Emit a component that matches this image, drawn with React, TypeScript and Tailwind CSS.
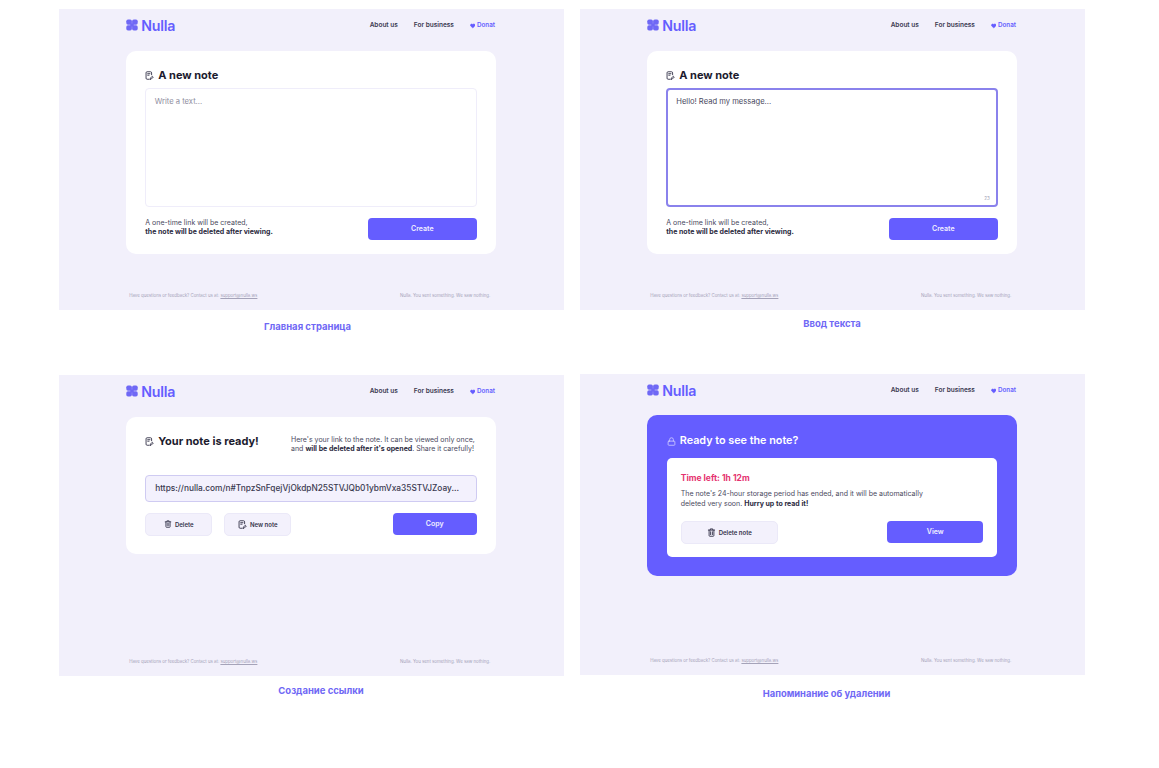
import { ReactNode } from 'react';
import { Heart, Lock } from 'lucide-react';

function Logo() {
  return (
    <svg width="12" height="12" viewBox="0 0 12 12" fill="#6f68f5">
      <rect x="0.3" y="0.6" width="5.6" height="5.2" rx="1.7" />
      <rect x="6.1" y="0.6" width="5.6" height="5.2" rx="1.7" />
      <rect x="0.3" y="6.2" width="5.6" height="5.2" rx="1.7" />
      <rect x="6.1" y="6.2" width="5.6" height="5.2" rx="1.7" />
      <rect x="4.2" y="4.2" width="3.6" height="3.6" />
    </svg>
  );
}

function NoteIcon({ size = 9 }: { size?: number }) {
  return (
    <svg width={size} height={size} viewBox="0 0 12 12" fill="none" stroke="#34334a" strokeWidth="1.2" strokeLinecap="round" strokeLinejoin="round">
      <path d="M5.6 11H2.8A1.4 1.4 0 0 1 1.4 9.6V2.4A1.4 1.4 0 0 1 2.8 1h4.6a1.4 1.4 0 0 1 1.4 1.4V5" />
      <path d="M3.6 3.6h3M3.6 5.6h1.8" />
      <path d="M7 10.9l.3-1.5 2.5-2.5 1.2 1.2-2.5 2.5z" />
    </svg>
  );
}

function TrashIcon({ size = 8 }: { size?: number }) {
  return (
    <svg width={size} height={size} viewBox="0 0 12 12" fill="none" stroke="#34334a" strokeWidth="1.2" strokeLinecap="round" strokeLinejoin="round">
      <path d="M1.8 2.8h8.4M4.4 2.6V1.2h3.2v1.4" />
      <path d="M2.8 2.8v7.2a1 1 0 0 0 1 1h4.4a1 1 0 0 0 1-1V2.8" />
      <path d="M4.8 5v3.8M7.2 5v3.8" />
    </svg>
  );
}

function Frame({ children }: { children: ReactNode }) {
  return (
    <div className="w-[505px] h-[301px] bg-[#f2f0fb] flex flex-col items-center">
      <div className="w-[369.5px] h-[33px] flex items-center justify-between shrink-0">
        <div className="flex items-center gap-[3px]">
          <Logo />
          <span className="text-[14.2px] font-semibold text-[#655dff] tracking-[-0.2px]">Nulla</span>
        </div>
        <nav className="flex items-center text-[6.5px] font-semibold text-[#3a3950] pt-[1px] pr-[0.75px]">
          <span className="mr-[16px]">About us</span>
          <span className="mr-[16px]">For business</span>
          <Heart size={5.5} className="text-[#655dff] mr-[1.5px]" fill="#655dff" />
          <span className="text-[#655dff] text-[6.3px]">Donat</span>
        </nav>
      </div>
      <div className="w-[369.5px] mt-[9px]">{children}</div>
      <div className="mt-auto mb-[10px] w-[369.5px] pl-[3px] pr-[5.5px] flex justify-between text-[4.37px] text-[#a5a3b9]">
        <span>
          Have questions or feedback? Contact us at: <span className="underline">support@nulla.ws</span>
        </span>
        <span>Nulla. You sent something. We saw nothing.</span>
      </div>
    </div>
  );
}

function NewNote({ active }: { active?: boolean }) {
  return (
    <div className="h-[203px] bg-white rounded-[10px] px-[19px] pt-[18px] flex flex-col">
      <div className="flex items-center gap-[4px] h-[13px]">
        <NoteIcon />
        <h2 className="text-[11px] font-bold text-[#1c1b2e]">A new note</h2>
      </div>
      {active ? (
        <div className="relative mt-[6px] h-[119px] rounded-[4px] border-2 border-[#8a82ec] px-[8px] pt-[6px] text-[7.6px] text-[#4a4960]">
          Hello! Read my message...
          <span className="absolute right-[6px] bottom-[2px] text-[4.5px] text-[#9d9bb2]">23</span>
        </div>
      ) : (
        <div className="mt-[6px] h-[119px] rounded-[4px] border border-[#efedfa] px-[8.5px] pt-[7px] text-[7.6px] text-[#8f8ea0]">Write a text...</div>
      )}
      <div className="mt-[11px] flex items-start justify-between">
        <p className="text-[7px] leading-[9px] text-[#4a4960]">
          A one-time link will be created,
          <br />
          <b className="font-bold text-[#2b2a3e]">the note will be deleted after viewing.</b>
        </p>
        <button className="w-[109px] h-[22px] rounded-[4px] bg-[#655dff] text-[#f1efff] text-[7px] font-semibold">Create</button>
      </div>
    </div>
  );
}

function GhostButton({ width, icon, label }: { width: string; icon: ReactNode; label: string }) {
  return (
    <button className={`${width} h-[22.5px] rounded-[5px] bg-[#f3f1fc] border border-[#ebe9f8] flex items-center justify-center gap-[3px] text-[6px] font-semibold text-[#34334a]`}>
      {icon}
      {label}
    </button>
  );
}

function ReadyNote() {
  return (
    <div className="h-[137px] bg-white rounded-[10px] px-[19px] pt-[18px]">
      <div className="flex justify-between">
        <div className="flex items-center gap-[4px] h-[13px]">
          <NoteIcon />
          <h2 className="text-[11px] font-bold text-[#1c1b2e]">Your note is ready!</h2>
        </div>
        <p className="text-[7px] leading-[9px] text-[#4a4960] pr-[2px]">
          Here's your link to the note. It can be viewed only once,
          <br />
          and <b className="font-bold text-[#2b2a3e]">will be deleted after it's opened</b>. Share it carefully!
        </p>
      </div>
      <div className="mt-[22px] h-[27px] rounded-[4px] bg-[#f3f1fd] border border-[#cfcbf2] pl-[9px] flex items-center text-[8.3px] font-medium text-[#3a3950] whitespace-nowrap">
        https://nulla.com/n#TnpzSnFqejVjOkdpN25STVJQb01ybmVxa35STVJZoay...
      </div>
      <div className="mt-[11px] flex items-center">
        <GhostButton width="w-[67px]" icon={<TrashIcon />} label="Delete" />
        <div className="w-[12px]" />
        <GhostButton width="w-[67px]" icon={<NoteIcon size={9} />} label="New note" />
        <button className="ml-auto w-[84px] h-[22px] rounded-[4px] bg-[#655dff] text-[#f1efff] text-[7px] font-semibold">Copy</button>
      </div>
    </div>
  );
}

function OpenNote() {
  return (
    <div className="-mt-[1px] h-[161px] bg-[#655dff] rounded-[10px] px-[19.5px] pt-[19px]">
      <div className="flex items-center gap-[4px] h-[14px] text-white">
        <Lock size={9} className="text-[#d9d6ff]" />
        <h2 className="text-[10.8px] font-semibold">Ready to see the note?</h2>
      </div>
      <div className="mt-[10px] h-[99px] bg-white rounded-[5px] px-[14px] pt-[15px]">
        <div className="text-[8.5px] font-bold text-[#e5336f] leading-[10px]">Time left: 1h 12m</div>
        <p className="mt-[6px] text-[7px] leading-[10px] text-[#4a4960]">
          The note's 24-hour storage period has ended, and it will be automatically
          <br />
          deleted very soon. <b className="font-bold text-[#2b2a3e]">Hurry up to read it!</b>
        </p>
        <div className="mt-[12px] flex items-center justify-between">
          <GhostButton width="w-[97px]" icon={<TrashIcon size={9} />} label="Delete note" />
          <button className="w-[96px] h-[22px] rounded-[4px] bg-[#655dff] text-[#f1efff] text-[7px] font-semibold">View</button>
        </div>
      </div>
    </div>
  );
}

export default function App() {
  return (
    <div className="w-[1159px] h-[768px] bg-white overflow-hidden font-['Inter',sans-serif] pl-[58.5px] pt-[9px]">
      <div className="grid grid-cols-[505px_505px] gap-x-[16px]">
        <div className="h-[366px]">
          <Frame><NewNote /></Frame>
          <p className="mt-[10px] pr-[7px] text-center text-[9.5px] font-bold text-[#6f68f5]">Главная страница</p>
        </div>
        <div className="h-[366px]">
          <Frame><NewNote active /></Frame>
          <p className="mt-[7px] text-center text-[9.5px] font-bold text-[#6f68f5]">Ввод текста</p>
        </div>
        <div>
          <Frame><ReadyNote /></Frame>
          <p className="mt-[8px] pl-[20px] text-center text-[9.5px] font-bold text-[#6f68f5]">Создание ссылки</p>
        </div>
        <div className="-mt-[1px]">
          <Frame><OpenNote /></Frame>
          <p className="mt-[12px] pr-[11px] text-center text-[9.4px] font-bold text-[#6f68f5]">Напоминание об удалении</p>
        </div>
      </div>
    </div>
  );
}
